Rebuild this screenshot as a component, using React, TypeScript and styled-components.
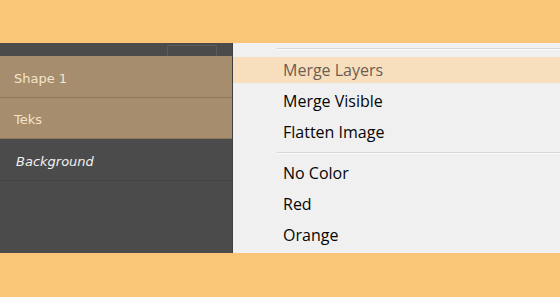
import React from "react";
import styled, { createGlobalStyle } from "styled-components";

const Global = createGlobalStyle`
  html, body { margin: 0; padding: 0; background: #f9c677; }
  #root { width: 560px; height: 297px; overflow: hidden; }
`;

const Page = styled.div`
  width: 560px;
  height: 297px;
  display: flex;
  flex-direction: column;
  background: #f9c677;
`;

const Band = styled.div<{ $h: number }>`
  height: ${(p) => p.$h}px;
  flex: none;
  background: #f9c677;
`;

const Middle = styled.div`
  height: 210px;
  display: flex;
  flex: none;
`;

const LayersPanel = styled.div`
  width: 232px;
  flex: none;
  background: #4b4b4b;
  border-right: 1px solid #3f3f3f;
  display: flex;
  flex-direction: column;
`;

const PanelHeader = styled.div`
  height: 13px;
  flex: none;
  display: flex;
  justify-content: flex-end;
  padding-right: 15px;
`;

const HeaderTab = styled.div`
  width: 48px;
  height: 10px;
  margin-top: 2px;
  border: 1px solid #5c5c5c;
  border-bottom: none;
  border-radius: 2px 2px 0 0;
`;

const LayerRow = styled.div<{ $selected?: boolean; $h: number }>`
  height: ${(p) => p.$h}px;
  flex: none;
  box-sizing: border-box;
  display: flex;
  align-items: center;
  padding: 3px 0 0 14px;
  background: ${(p) => (p.$selected ? "#a58d6d" : "#4b4b4b")};
  border-bottom: 1px solid ${(p) => (p.$selected ? "#8d7659" : "#434343")};
  font-family: "DejaVu Sans", Verdana, sans-serif;
  font-size: 13px;
  color: ${(p) => (p.$selected ? "#f5e4ca" : "#f0f0f0")};
`;

const LayerName = styled.span<{ $italic?: boolean }>`
  font-style: ${(p) => (p.$italic ? "italic" : "normal")};
  padding-left: ${(p) => (p.$italic ? 2 : 0)}px;
`;

const Menu = styled.div`
  flex: 1;
  background: #f0f0f0;
  display: flex;
  flex-direction: column;
  padding-top: 4px;
`;

const Separator = styled.div<{ $mt: number; $mb: number }>`
  margin: ${(p) => p.$mt}px 0 ${(p) => p.$mb}px 44px;
  height: 1px;
  border-bottom: 1px solid #fbfbfb;
  background: #d7d7d7;
  flex: none;
`;

const Items = styled.div`
  display: flex;
  flex-direction: column;
  gap: 5px;
`;

const Item = styled.div<{ $active?: boolean }>`
  height: 26px;
  display: flex;
  align-items: center;
  padding-left: 50px;
  background: ${(p) => (p.$active ? "#f7dfbd" : "transparent")};
  color: ${(p) => (p.$active ? "#6d5d52" : "#050505")};
  font-family: "Open Sans", "Noto Sans", sans-serif;
  font-size: 16px;
`;

export default function App() {
  return (
    <>
      <Global />
      <Page>
        <Band $h={43} />
        <Middle>
          <LayersPanel>
            <PanelHeader>
              <HeaderTab />
            </PanelHeader>
            <LayerRow $selected $h={42}>
              <LayerName>Shape 1</LayerName>
            </LayerRow>
            <LayerRow $selected $h={41}>
              <LayerName>Teks</LayerName>
            </LayerRow>
            <LayerRow $h={42}>
              <LayerName $italic>Background</LayerName>
            </LayerRow>
          </LayersPanel>
          <Menu>
            <Separator $mt={1} $mb={7} />
            <Items>
              <Item $active>Merge Layers</Item>
              <Item>Merge Visible</Item>
              <Item>Flatten Image</Item>
            </Items>
            <Separator $mt={7} $mb={6} />
            <Items>
              <Item>No Color</Item>
              <Item>Red</Item>
              <Item>Orange</Item>
            </Items>
          </Menu>
        </Middle>
        <Band $h={44} />
      </Page>
    </>
  );
}
